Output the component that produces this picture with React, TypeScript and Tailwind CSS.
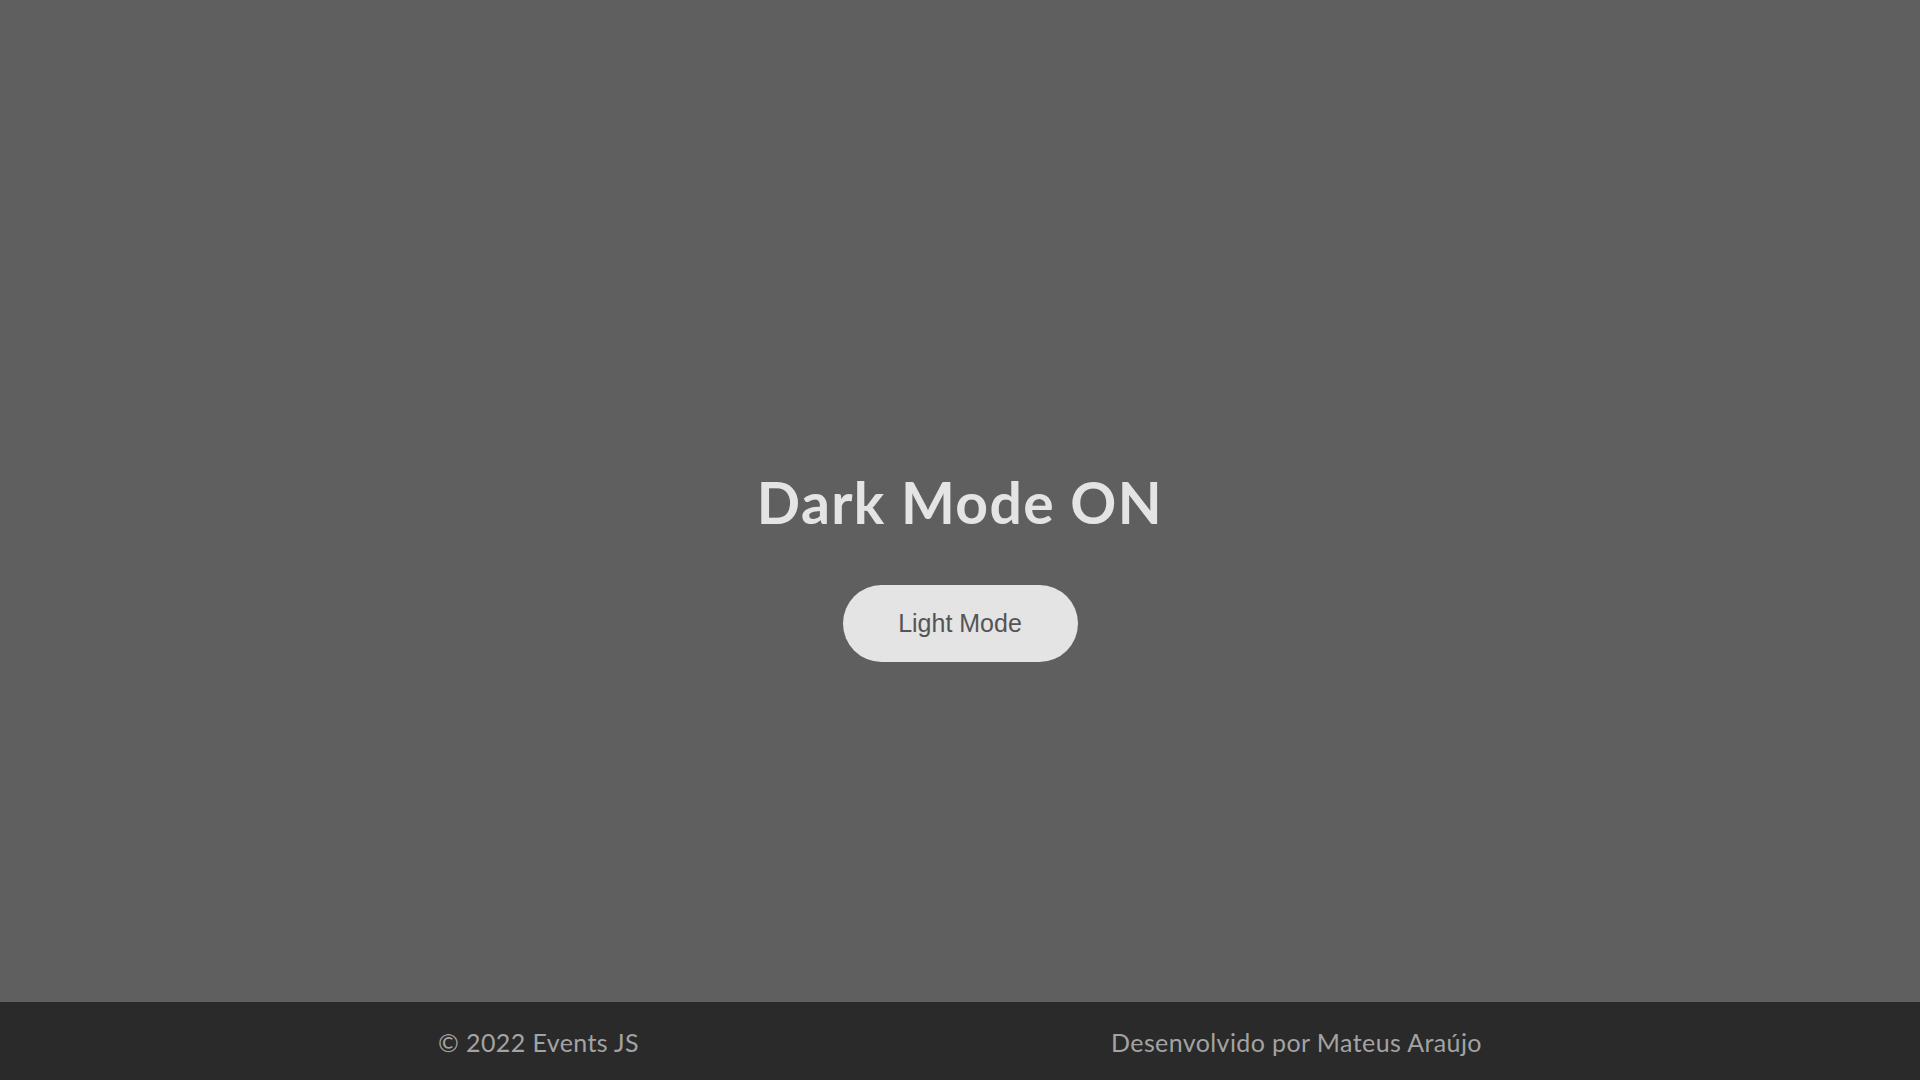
import React from "react";

const App: React.FC = () => {
  return (
    <div className="flex h-screen w-full flex-col bg-[#5f5f5f] font-['Lato','Noto_Sans',sans-serif]">
      {/* Main */}
      <main className="flex flex-1 flex-col items-center justify-center pt-[129px]">
        <h1 className="text-[57px] leading-[66px] font-bold tracking-[1.4px] text-[#e4e4e4]">Dark Mode ON</h1>
        <button className="mt-[50px] h-[77px] w-[235px] rounded-full bg-[#e4e4e4] font-['Liberation_Sans',Arial,sans-serif] text-[25px] text-[#555555]">
          Light Mode
        </button>
      </main>

      {/* Footer */}
      <footer className="flex h-[78px] items-center justify-center gap-[472px] bg-[#2a2a2a] pt-[3px] text-[25px] tracking-[0.4px] text-[#a3a3a3]">
        <p>© 2022 Events JS</p>
        <p>Desenvolvido por Mateus Araújo</p>
      </footer>
    </div>
  );
};

export default App;
